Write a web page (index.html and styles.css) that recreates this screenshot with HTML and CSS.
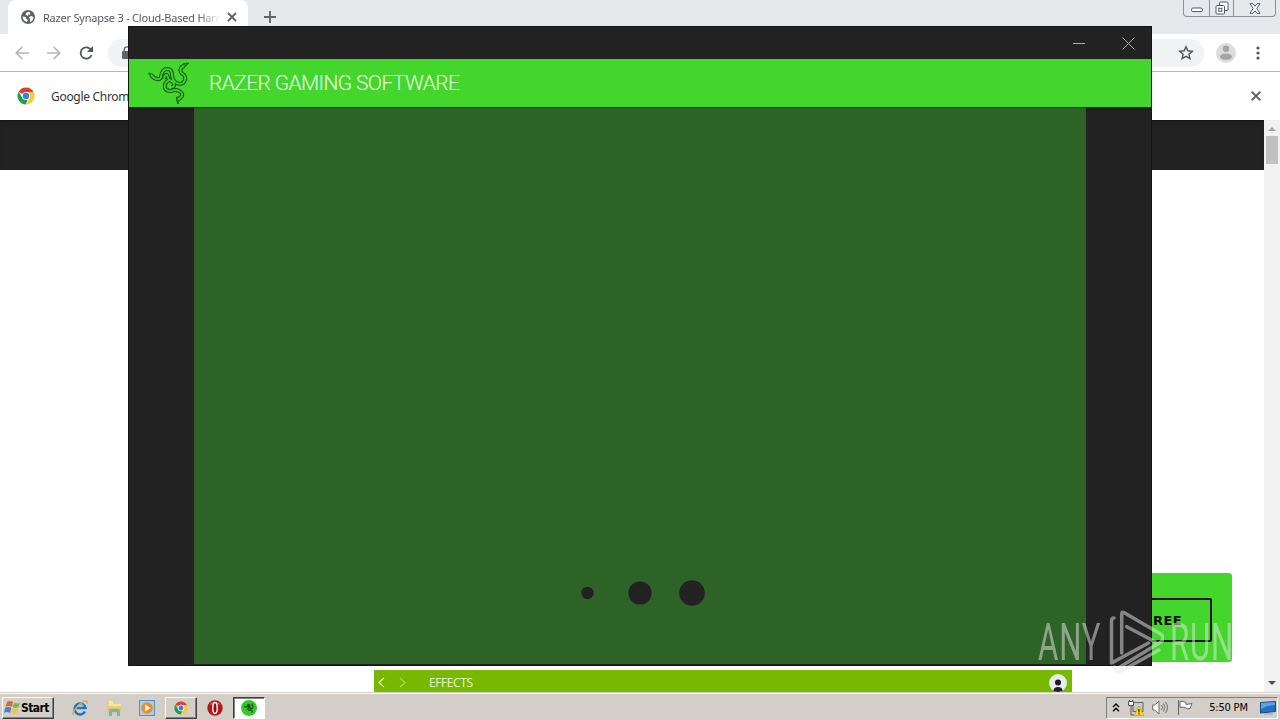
FILE: index.html
```
<!DOCTYPE html>
<html lang="en">
<head>
  <meta charset="UTF-8">
  <title>Razer Synapse 3</title>
  <link rel="stylesheet" href="styles.css">
</head>
<body>

  <svg class="defs" width="0" height="0">
    <symbol id="chrome" viewBox="0 0 18 18">
      <path d="M9 9 1.6 4.8A8.5 8.5 0 0 1 16.5 5H9z" fill="#e33b2e"/>
      <path d="M9 5h7.5A8.5 8.5 0 0 1 9 17.5L12.5 11z" fill="#fcc934"/>
      <path d="M1.6 4.8 5.5 11l3.5 2 1.8-.5L8.6 17.5A8.5 8.5 0 0 1 1.6 4.8z" fill="#1e9e4a"/>
      <circle cx="9" cy="9" r="4.1" fill="#fff"/>
      <circle cx="9" cy="9" r="3.2" fill="#3b7de9"/>
    </symbol>
    <path id="snakes" d="M3 13l3 3 3 1q3 1 4-2 1-8 6-8 5 0 5 6 0 4 3 7 4 3 8 1 4-4 1-8-5-3-3-7l3-2M16 17q1-5 3-4l2 5q-5 3-4 8 1 3 6 3 5-2 8 0 4 2 3 5l-3 3v1M22 18q3 1 4 4 1 3-3 3"/>
    <path id="heads" d="M1 11l4 1.500 3 3-3 1-4-4zM41 1l-3 3-5 2-1-2 4-2.500zM28.500 35h3.500l-.5 3-1.500 4-1.500-4z"/>
  </svg>

  <div class="desktop">
    <div class="browser">
      <div class="tab-strip">
        <div class="tab">
          <svg width="14" height="14" viewBox="0 0 14 14">
            <circle cx="7" cy="7" r="7" fill="#5f6368"/>
            <path d="M7.500 1.700Q5 2 4.500 4.500L6.500 6l1-1.500h2L8.500 2zM1.700 6.500q0 4 4 5.500L7 10 5 8.500 4.500 7zM8 7l1 2v3q3.500-1.500 3.400-5L10.500 6z" fill="#fff"/>
          </svg>
          <span class="tab-title">Razer Synapse 3 - Cloud-Based Hard</span>
          <svg width="10" height="10" viewBox="0 0 10 10"><path d="M1 1l8 8M9 1L1 9" stroke="#5f6368" stroke-width="1.8"/></svg>
        </div>
        <svg class="new-tab" width="12" height="12" viewBox="0 0 12 12"><path d="M6 0v12M0 6h12" stroke="#5f6368" stroke-width="1.8"/></svg>
        <div class="caption-buttons">
          <span class="caption"><svg width="12" height="6" viewBox="0 0 12 6"><rect x=".5" y="1" width="11" height="3.6" rx="1.5" fill="#fff" stroke="#4e596b"/></svg></span>
          <span class="caption caption-restore"><svg width="14" height="14" viewBox="0 0 14 14" fill="#fff" stroke="#4e596b"><rect x="4.5" y="1" width="8.5" height="8.5" rx="1"/><rect x="1" y="4.5" width="8.5" height="8.5" rx="1"/><rect x="3.8" y="7.3" width="3" height="3"/></svg></span>
          <span class="caption caption-close"><svg width="12" height="11" viewBox="0 0 12 11"><path d="M1 .7h3l2 2.5L8 .7h3L7.8 5.5 11 10.3H8L6 7.8l-2 2.5H1l3.2-4.8z" fill="#fff" stroke="#4e596b"/></svg></span>
        </div>
      </div>

      <div class="toolbar">
        <svg width="14" height="14" viewBox="0 0 14 14" fill="none" stroke="#b4b6b8" stroke-width="1.7"><path d="M14 7H1.5M7.3 1L1.3 7l6 6"/></svg>
        <svg width="14" height="14" viewBox="0 0 14 14" fill="none" stroke="#b4b6b8" stroke-width="1.7"><path d="M0 7h12.5M6.7 1l6 6-6 6"/></svg>
        <svg width="15" height="14" viewBox="0 0 15 14"><path d="M12.1 4.2A5.6 5.6 0 1 0 12.5 9" fill="none" stroke="#505458" stroke-width="1.8"/><path d="M14 0v6H8z" fill="#505458"/></svg>
        <div class="address">
          <svg width="10" height="14" viewBox="0 0 10 14"><path d="M2.3 6V3.5a2.7 2.7 0 0 1 5.4 0V6" fill="none" stroke="#5f6368" stroke-width="1.3"/><rect y="5" width="10" height="8" rx="1" fill="#5f6368"/></svg>
          <svg width="16" height="16" viewBox="0 0 16 16"><path d="M8 1.7l1.8 4.1 4.5.4-3.4 3 1 4.4L8 11.3l-3.9 2.3 1-4.4-3.4-3 4.5-.4z" fill="none" stroke="#505458" stroke-width="1.4"/></svg>
        </div>
        <svg width="20" height="20" viewBox="0 0 20 20"><circle cx="10" cy="10" r="10" fill="#dcdcdc"/><circle cx="10" cy="5.8" r="3.2" fill="#a5a5a5"/><ellipse cx="10" cy="13.8" rx="6" ry="3.2" fill="#a5a5a5"/></svg>
        <svg width="4" height="14" viewBox="0 0 4 14" fill="#505458"><circle cx="2" cy="2" r="1.6"/><circle cx="2" cy="7" r="1.6"/><circle cx="2" cy="12" r="1.6"/></svg>
      </div>

      <div class="infobar">
        <svg width="18" height="18"><use href="#chrome"/></svg>
        <span>Google Chrome</span>
        <svg class="infobar-close" width="10" height="10" viewBox="0 0 10 10"><path d="M.7.7l8.6 8.6M9.3.7L.7 9.3" stroke="#666" stroke-width="2"/></svg>
      </div>

      <div class="viewport">
        <div class="page">
          <div class="site-header"></div>
          <div class="promo">
            <div class="download">FREE</div>
          </div>
          <div class="effects">
            <svg width="28" height="11" viewBox="0 0 28 11" fill="none"><path d="M6 1L1 5.5 6 10" stroke="#e4f5c8" stroke-width="1.2"/><path d="M22 1l5 4.5-5 4.5" stroke="#a9dc50" stroke-width="1.2"/></svg>
            <span>EFFECTS</span>
            <svg class="avatar" width="18" height="18" viewBox="0 0 18 18"><circle cx="9" cy="9" r="9" fill="#e8eaed"/><circle cx="9" cy="8.5" r="3" fill="#1b1b1b"/><path d="M4.5 17q0-4 4.5-4t4.5 4L9 18z" fill="#1b2228"/></svg>
          </div>
        </div>
        <div class="scrollbar">
          <svg width="8" height="4" viewBox="0 0 8 4"><path d="M0 4l4-4 4 4z" fill="#a3a3a3"/></svg>
          <div class="thumb"></div>
          <svg class="arrow-down" width="8" height="4" viewBox="0 0 8 4"><path d="M0 0h8L4 4z" fill="#505050"/></svg>
        </div>
      </div>
    </div>

    <div class="taskbar">
      <div class="start">
        <svg width="17" height="16" viewBox="0 0 17 16"><path d="M3 2q3-2 6 0L7.5 7q-3-2-6 0z" fill="#e5652d"/><path d="M10 2.5q3 2 6 0L14.5 7q-3 2-6 0z" fill="#79b93d"/><path d="M1.2 8q3-2 6 0L6 13q-3-2-6 0z" fill="#3c85c8"/><path d="M8.3 8.3q3 2 6 0L13 13q-3 2-6 0z" fill="#f4c53a"/></svg>
        <span>Start</span>
      </div>
      <div class="launch">
        <svg width="18" height="18" viewBox="0 0 18 18"><path d="M14 12.500A5.500 5.500 0 1 1 14.500 9H5" fill="none" stroke="#1777cf" stroke-width="2.6"/><path d="M6 7q3-4 7 0" fill="none" stroke="#65c4f4"/><path d="M3 16Q0 15 6 8 13 1 16 2q1 1 0 3" fill="none" stroke="#e8ad29" stroke-width="1.3"/></svg>
        <svg width="16" height="16" viewBox="1 1 16 16"><path d="M2 3h5l1 2h8v10H2z" fill="#edcc66"/><path d="M4 2h4v3h8v4H3z" fill="#fae79b"/><path d="M3 8h13M3 10h13" stroke="#d9b450"/><path d="M4 17v-5q0-2 2-2h7q2 0 2 2v5h-3v-4H7v4z" fill="#62b8de"/></svg>
        <svg width="16" height="16" viewBox="0 0 16 16"><rect x=".5" y=".5" width="15" height="15" fill="#a7ceef" stroke="#5292c8"/><circle cx="8" cy="8" r="5.8" fill="#f18b1e"/><path d="M6 4.5L11.5 8 6 11.5z" fill="#fff"/></svg>
      </div>
      <div class="task"><svg width="14" height="14"><use href="#chrome"/></svg></div>
      <svg class="opera" width="16" height="16" viewBox="0 0 16 16"><circle cx="8" cy="8" r="7.7" fill="#b51616"/><path d="M2 5q6-7 12 0-6-2-12 0z" fill="#e26a62"/><ellipse cx="8" cy="8" rx="2.2" ry="5.5" fill="#8f1010" stroke="#fff" stroke-width="1.4"/></svg>
      <div class="task task-active">
        <svg width="16" height="16" viewBox="0 0 16 16"><circle cx="8" cy="8" r="8" fill="#38c82c"/><g transform="translate(2.5 2.7) scale(.26)" fill="none" stroke="#17551a" stroke-width="5"><use href="#snakes"/></g></svg>
      </div>
      <div class="tray">
        <svg width="8" height="9" viewBox="0 0 8 9" fill="none" stroke="#000" stroke-width="1.4"><path d="M1 4l3-3 3 3M1 8.3l3-3 3 3"/></svg>
        <svg width="16" height="16" viewBox="0 0 16 16"><rect x="5" y="2.5" width="10" height="9" fill="#c6c9c8" stroke="#666"/><path d="M.5 1.500h5v4h-5z" fill="#fff" stroke="#555"/><path d="M1.500 0v2M4.500 0v2M3 6v9h3" fill="none" stroke="#555"/><path d="M11 6l5 9.5H6z" fill="#ffda22" stroke="#a98d00" stroke-width=".5"/><path d="M11 9v3.5M11 13.2v1.2" stroke="#222" stroke-width="1.2"/></svg>
        <svg width="17" height="15" viewBox="0 0 17 15" fill="none" stroke="#6b6b6b"><path d="M.7 5h2L7 1v13l-4.3-4h-2z" fill="#fff"/><path d="M9.5 5q2 2.500 0 5M11.500 3.500q3 4 0 8M13.500 2q4 5.500 0 11"/></svg>
        <svg width="16" height="15" viewBox="0 0 16 15"><path d="M1.500 0v15M3 1.500q3-1 6 1v2l6-1-2 5q-3 1-5-1-2-1-5 0z" fill="#fff" stroke="#666"/></svg>
        <span class="clock">5:50 PM</span>
        <svg width="16" height="14" viewBox="0 0 16 14"><path d="M.5 1.500l15-1v10L.5 12z" fill="#2470c4" stroke="#174a7c"/><path d="M1 2l14-1v3Q7 4 1 8z" fill="#5da1e4"/><path d="M4 13h9" stroke="#89a9c5"/></svg>
      </div>
    </div>

    <div class="installer">
      <div class="installer-caption">
        <svg width="12" height="2" viewBox="0 0 12 2"><path d="M0 1.500h12" stroke="#aaa" stroke-width="1"/></svg>
        <svg width="13" height="13" viewBox="0 0 13 13"><path d="M.5.5l12 12M12.500.5l-12 12" stroke="#aaa"/></svg>
      </div>
      <div class="installer-title">
        <svg width="42" height="42" viewBox="0 0 42 42" fill="none" stroke-linejoin="round">
          <use href="#snakes" stroke="#175a18" stroke-width="4"/>
          <use href="#heads" fill="#2d8f24" stroke="#175a18" stroke-width=".8"/>
          <use href="#snakes" stroke="#3fce2c" stroke-width="1.900"/>
        </svg>
        <span>RAZER GAMING SOFTWARE</span>
      </div>
      <div class="installer-body">
        <div class="splash">
          <svg width="124" height="26" viewBox="0 0 124 26" fill="#222"><circle cx="6.500" cy="13" r="6.200"/><circle cx="59" cy="13" r="11.600"/><circle cx="111" cy="13" r="12.800"/></svg>
        </div>
      </div>
    </div>

    <div class="watermark">
      <span>ANY</span>
      <svg width="56" height="64" viewBox="0 0 56 64" fill="none" stroke="currentColor" stroke-width="3.500" stroke-linejoin="round" stroke-linecap="round"><path d="M13.700 43V4q0-3 3-1l36 21q5 4 0 8L12 57M6 8q-2.500 0-2.500 3v42l37-20M18.700 16.700L47 31.700M6 57q3 7 9 3l36-20"/></svg>
      <span>RUN</span>
    </div>
  </div>

</body>
</html>
```
FILE: styles.css
```
* {
  box-sizing: border-box;
}

body {
  margin: 0;
  font-family: "DejaVu Sans Condensed", "DejaVu Sans", sans-serif;
  font-size: 11px;
  color: #333;
}

svg {
  display: block;
  flex-shrink: 0;
}

.defs {
  position: absolute;
}

.desktop {
  position: relative;
  width: 1280px;
  height: 720px;
  overflow: hidden;
  display: flex;
  flex-direction: column;
}

.browser {
  height: 692px;
  display: flex;
  flex-direction: column;
  background: #fff;
}

/* tabs */
.tab-strip {
  height: 34px;
  display: flex;
  background: #e5e9ec;
  padding-left: 8px;
}

.tab {
  width: 240px;
  display: flex;
  align-items: center;
  padding: 0 11px 0 13px;
  background: #fff;
  border-radius: 8px 8px 0 0;
}

.tab-title {
  flex: 1;
  margin: 0 7px 0 8px;
  overflow: hidden;
  white-space: nowrap;
  color: #55585c;
  font: 11px "Noto Sans", sans-serif;
  letter-spacing: -0.22px;
  mask-image: linear-gradient(to right, #000 88%, transparent);
}

.new-tab {
  margin: 11px 0 0 16px;
}

.caption-buttons {
  display: flex;
  width: 93px;
  height: 17px;
  margin-left: auto;
  margin-right: 4px;
  border: 1px solid #8c9197;
  border-top: 0;
  border-radius: 0 0 4px 4px;
}

.caption {
  width: 25px;
  display: flex;
  align-items: center;
  justify-content: center;
  padding-top: 4px;
}

.caption-restore {
  padding-top: 0;
  border: 1px solid #8c9197;
  border-width: 0 1px;
}

.caption-close {
  flex: 1;
  padding-top: 0;
}

/* toolbar */
.toolbar {
  height: 38px;
  display: flex;
  align-items: center;
  gap: 18px;
  padding: 0 20px 0 15px;
  border-bottom: 1px solid #b4b6b8;
}

.address {
  flex: 1;
  height: 28px;
  display: flex;
  align-items: center;
  justify-content: space-between;
  margin: 0 -6px 0 -4px;
  padding: 0 10px 0 14px;
  border-radius: 14px;
  background: #f0f2f4;
}

.address + svg {
  margin-right: 2px;
}

.infobar {
  height: 48px;
  display: flex;
  align-items: center;
  padding: 0 19px 0 17px;
  color: #333;
}

.infobar span {
  margin-left: 16px;
  font: 12px "Noto Sans", sans-serif;
  letter-spacing: -0.3px;
}

.infobar-close {
  margin-left: auto;
}

/* web page */
.viewport {
  flex: 1;
  display: flex;
}

.page {
  flex: 1;
  display: flex;
  flex-direction: column;
}

.site-header {
  height: 50px;
  background: #222;
  box-shadow: inset 0 3px 3px -2px #111;
}

.promo {
  width: 240px;
  height: 89px;
  margin: auto 32px 8px auto;
  padding: 25px 20px 20px;
  border-radius: 3px;
  background: #44d62c;
}

.download {
  height: 44px;
  padding-right: 28px;
  border: 2px solid #111;
  border-radius: 2px;
  font: bold 13px/41px "DejaVu Sans", sans-serif;
  letter-spacing: 0.4px;
  text-align: right;
  color: #111;
}

.effects {
  width: 698px;
  height: 22px;
  margin-left: 374px;
  display: flex;
  align-items: center;
  padding: 3px 5px 0 4px;
  background: #76b900;
  color: #e9f7d2;
  font: 12px "Open Sans", sans-serif;
}

.effects span {
  margin-left: 23px;
  letter-spacing: -0.4px;
}

.effects .avatar {
  margin-left: auto;
}

.scrollbar {
  width: 16px;
  display: flex;
  flex-direction: column;
  align-items: center;
  padding: 7px 0;
  background: #f1f1f1;
}

.thumb {
  width: 12px;
  height: 28px;
  margin-top: 5px;
  background: #c1c1c1;
}

.arrow-down {
  margin-top: auto;
}

/* taskbar */
.taskbar {
  height: 28px;
  display: flex;
  align-items: center;
  padding: 2px 2px 0;
  border-top: 1px solid #d4d0c8;
  box-shadow: inset 0 1px #fff;
  background: #d4cec8;
}

.start,
.task {
  height: 22px;
  display: flex;
  align-items: center;
  border: 1px solid;
  border-color: #fff #404040 #404040 #fff;
  box-shadow: inset -1px -1px #808080;
}

.start {
  width: 52px;
  padding-left: 1px;
  color: #000;
  font-weight: bold;
  font-size: 12px;
  letter-spacing: -0.6px;
}

.launch {
  display: flex;
  align-items: center;
  gap: 17px;
  margin-left: 17px;
}

.task {
  width: 32px;
  justify-content: center;
  margin-left: 10px;
}

.opera {
  margin-left: 10px;
}

.task-active {
  border-color: #404040 #fff #fff #404040;
  box-shadow: inset 1px 1px #808080;
  background: #fff;
}

.tray {
  width: 172px;
  height: 22px;
  display: flex;
  align-items: center;
  margin-left: auto;
  padding: 0 1px 0 5px;
  border: 1px solid;
  border-color: #808080 #fff #fff #808080;
  color: #000;
}

.tray svg + svg {
  margin-left: 8px;
}

.clock {
  margin: 0 auto;
  padding-left: 4px;
  letter-spacing: -0.2px;
}

/* installer window */
.installer {
  position: absolute;
  left: 128px;
  top: 26px;
  width: 1024px;
  height: 640px;
  display: flex;
  flex-direction: column;
  border: 1px solid #141414;
  background: #222;
}

.installer-caption {
  height: 32px;
  display: flex;
  align-items: center;
  justify-content: flex-end;
  gap: 37px;
  padding-right: 16px;
}

.installer-title {
  height: 48px;
  display: flex;
  align-items: center;
  padding-left: 19px;
  background: #44d62c;
  color: #edffe9;
  font: 300 21px "Roboto", sans-serif;
}

.installer-title span {
  margin-left: 19px;
  letter-spacing: -0.62px;
}

.installer-body {
  flex: 1;
  padding: 0 65px 1px;
  border-top: 1px solid #1c2b1a;
}

.splash {
  height: 100%;
  display: flex;
  align-items: flex-end;
  justify-content: center;
  padding: 0 0 58px 5px;
  background: #2e6327;
}

/* overlay mark */
.watermark {
  position: absolute;
  left: 1038px;
  top: 610px;
  display: flex;
  align-items: center;
  opacity: 0.5;
  color: #e8e8e8;
  font: 400 38px "Roboto", sans-serif;
}

.watermark span {
  width: 64px;
  letter-spacing: 1px;
  transform: scale(0.82, 1.35);
  transform-origin: left center;
}

.watermark svg {
  margin: 0 6px;
}
```
